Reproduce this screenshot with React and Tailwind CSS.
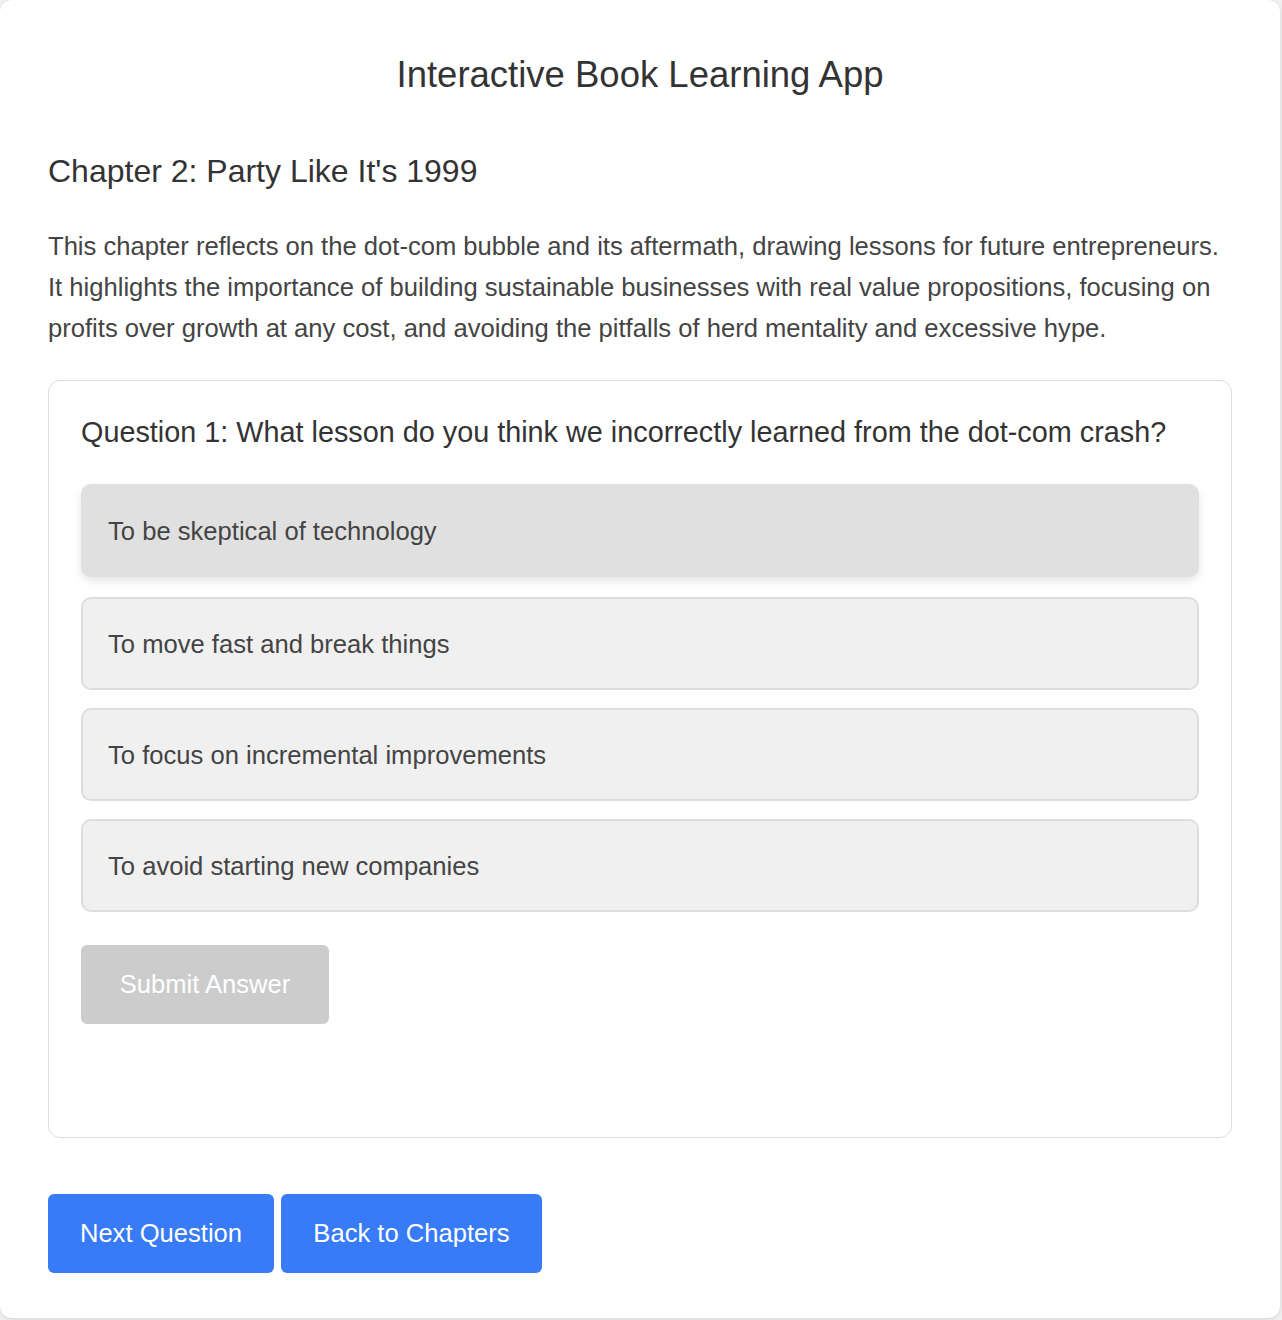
import React, { useState } from 'react';

const options = [
  'To be skeptical of technology',
  'To move fast and break things',
  'To focus on incremental improvements',
  'To avoid starting new companies',
];

export default function App() {
  const [selected, setSelected] = useState(0);

  return (
    <div className="min-h-[1320px] bg-[#f0f0f0] font-['Liberation_Sans',Arial,sans-serif]">
      <div className="w-[1280px] h-[1318px] bg-white rounded-[12px] shadow-[0_1px_4px_rgba(0,0,0,0.12)] px-[48px] pt-[54px]">
        <h1 className="text-center text-[36.5px] leading-[41px] text-[#333]">Interactive Book Learning App</h1>

        <h2 className="mt-[58px] text-[32px] leading-[37px] text-[#333]">Chapter 2: Party Like It's 1999</h2>

        <p className="mt-[36px] text-[25.6px] leading-[41px] text-[#444]">
          This chapter reflects on the dot-com bubble and its aftermath, drawing lessons for future entrepreneurs.
          It highlights the importance of building sustainable businesses with real value propositions, focusing on
          profits over growth at any cost, and avoiding the pitfalls of herd mentality and excessive hype.
        </p>

        <div className="mt-[31px] h-[758px] border border-[#ddd] rounded-[12px] px-[32px] pt-[33px]">
          <h3 className="text-[28.8px] leading-[36px] text-[#333]">
            Question 1: What lesson do you think we incorrectly learned from the dot-com crash?
          </h3>

          <div className="mt-[36px] flex flex-col gap-[18px]">
            {options.map((opt, i) => (
              <button
                key={opt}
                onClick={() => setSelected(i)}
                className={
                  i === selected
                    ? 'text-left h-[93px] px-[25px] pt-[2px] border-2 border-[#e0e0e0] bg-[#e0e0e0] rounded-[10px] text-[25.6px] text-[#444] shadow-[0_4px_8px_rgba(0,0,0,0.1)] -translate-y-[2px]'
                    : 'text-left h-[93px] px-[25px] pt-[2px] border-2 border-[#ddd] bg-[#f0f0f0] rounded-[10px] text-[25.6px] text-[#444]'
                }
              >
                {opt}
              </button>
            ))}
          </div>

          <button className="mt-[33px] w-[248px] h-[79px] bg-[#ccc] text-white rounded-[6px] text-[25.6px]">
            Submit Answer
          </button>
        </div>

        <div className="mt-[56px] flex gap-[7px]">
          <button className="w-[226px] h-[79px] bg-[#387bf6] text-white rounded-[6px] text-[25.6px]">Next Question</button>
          <button className="w-[261px] h-[79px] bg-[#387bf6] text-white rounded-[6px] text-[25.6px]">Back to Chapters</button>
        </div>
      </div>
    </div>
  );
}
